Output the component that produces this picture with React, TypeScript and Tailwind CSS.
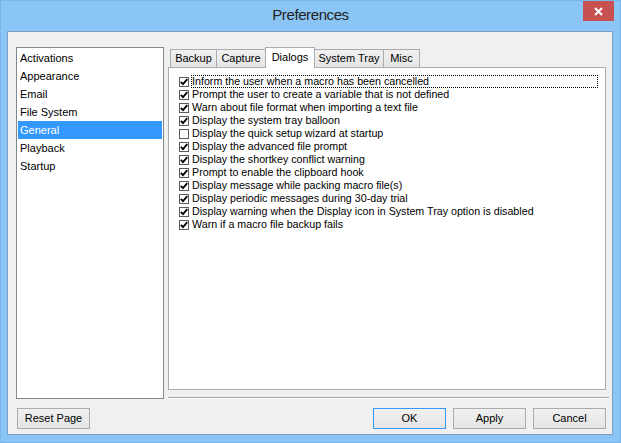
import React from "react";

// left-hand category list
const categories = ["Activations", "Appearance", "Email", "File System", "General", "Playback", "Startup"];

const tabs = [
  { name: "Backup", w: "w-[47px]" },
  { name: "Capture", w: "w-[50px]" },
  { name: "Dialogs", w: "w-[50px]" },
  { name: "System Tray", w: "w-[70px]" },
  { name: "Misc", w: "w-[37px]" },
];

// dialog options on the Dialogs tab
const options = [
  { label: "Inform the user when a macro has been cancelled", on: true },
  { label: "Prompt the user to create a variable that is not defined", on: true },
  { label: "Warn about file format when importing a text file", on: true },
  { label: "Display the system tray balloon", on: true },
  { label: "Display the quick setup wizard at startup", on: false },
  { label: "Display the advanced file prompt", on: true },
  { label: "Display the shortkey conflict warning", on: true },
  { label: "Prompt to enable the clipboard hook", on: true },
  { label: "Display message while packing macro file(s)", on: true },
  { label: "Display periodic messages during 30-day trial", on: true },
  { label: "Display warning when the Display icon in System Tray option is disabled", on: true },
  { label: "Warn if a macro file backup fails", on: true },
];

function CheckBox({ on }: { on: boolean }) {
  return (
    <div className="w-[10px] h-[10px] shrink-0 border border-[#5a5a5a] bg-white flex items-center justify-center">
      {on && (
        <svg width="8" height="8" viewBox="0 0 8 8">
          <path d="M0.8 3.9 L3 6.2 L7.3 1.2" fill="none" stroke="#000" strokeWidth="1.8" />
        </svg>
      )}
    </div>
  );
}

function Button({ children, primary }: { children: React.ReactNode; primary?: boolean }) {
  return (
    <button
      className={`w-[73px] h-[21px] border bg-gradient-to-b from-[#f0f0f0] to-[#e5e5e5] text-[11px] leading-none text-black ${
        primary ? "border-[#3399ff]" : "border-[#acacac]"
      }`}
    >
      {children}
    </button>
  );
}

export default function App() {
  return (
    <div className="w-[621px] h-[443px] bg-[#8bc5f6] border border-[#7ab6ec] flex flex-col font-['Liberation_Sans',Arial,sans-serif] text-[11px] text-black">
      {/* title bar */}
      <div className="h-[30px] relative flex justify-center pt-[5px] shrink-0">
        <span className="text-[15px] leading-[18px] tracking-[-0.4px] text-[#222]">Preferences</span>
        <div className="absolute right-[6px] top-0 w-[31px] h-[20px] bg-[#c75050] flex items-center justify-center">
          <svg width="9" height="9" viewBox="0 0 9 9">
            <path d="M1 1 L8 8 M8 1 L1 8" stroke="#fff" strokeWidth="2" />
          </svg>
        </div>
      </div>

      {/* client area */}
      <div className="ml-[6px] mr-[7px] h-[404px] bg-[#f0f0f0] border border-[#7c9fc4] flex flex-col pl-[8px] pt-[15px]">
        <div className="flex h-[352px]">
          <div className="w-[148px] h-full border border-[#828790] bg-white pt-px">
            {categories.map((c) => (
              <div
                key={c}
                className={`h-[18px] mx-px pl-[2px] flex items-center ${c === "General" ? "bg-[#3399ff] text-white" : ""}`}
              >
                {c}
              </div>
            ))}
          </div>

          <div className="ml-[4px] w-[441px] flex flex-col">
            {/* tab strip */}
            <div className="h-[20px] flex items-end pl-[2px] shrink-0">
              {tabs.map((t, i) => {
                const sel = t.name === "Dialogs";
                return (
                  <div
                    key={t.name}
                    className={`${t.w} ${i > 0 ? "-ml-px" : ""} border border-b-0 border-[#acacac] flex items-center justify-center ${
                      sel
                        ? "h-[21px] -mb-px bg-white relative z-10 pb-[2px]"
                        : "h-[18px] bg-gradient-to-b from-[#f0f0f0] to-[#e5e5e5]"
                    }`}
                  >
                    {t.name}
                  </div>
                );
              })}
            </div>

            {/* tab panel */}
            <div className="h-[324px] w-[438px] border border-[#acacac] bg-white pt-[7px] pl-[10px] flex flex-col">
              {options.map((o, i) => (
                <div key={o.label} className="h-[13px] flex items-center">
                  <CheckBox on={o.on} />
                  <div
                    className={`ml-[2px] mr-[7px] flex-1 h-[13px] leading-[11px] text-[10.7px] border whitespace-nowrap ${
                      i === 0 ? "border-dotted border-black" : "border-transparent"
                    }`}
                  >
                    {o.label}
                  </div>
                </div>
              ))}
            </div>

            <div className="mt-[7px] h-[2px] border-t border-[#a0a0a0] border-b border-b-white" />
          </div>
        </div>

        {/* buttons */}
        <div className="flex mt-[9px] pl-px pr-[6px]">
          <Button>Reset Page</Button>
          <div className="ml-auto flex gap-[7px]">
            <Button primary>OK</Button>
            <Button>Apply</Button>
            <Button>Cancel</Button>
          </div>
        </div>
      </div>
    </div>
  );
}
